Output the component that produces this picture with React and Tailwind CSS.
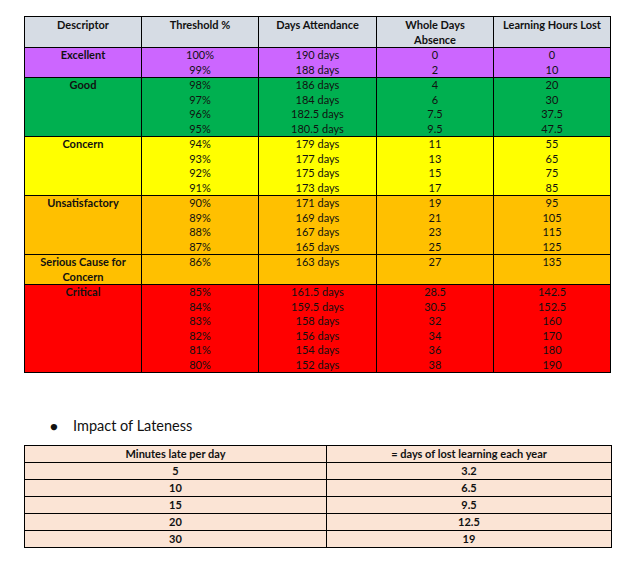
import React from 'react'

const bands = [
  {
    name: 'Excellent',
    bg: 'bg-[#cc66ff]',
    rows: [
      ['100%', '190 days', '0', '0'],
      ['99%', '188 days', '2', '10'],
    ],
  },
  {
    name: 'Good',
    bg: 'bg-[#00b050]',
    rows: [
      ['98%', '186 days', '4', '20'],
      ['97%', '184 days', '6', '30'],
      ['96%', '182.5 days', '7.5', '37.5'],
      ['95%', '180.5 days', '9.5', '47.5'],
    ],
  },
  {
    name: 'Concern',
    bg: 'bg-[#ffff00]',
    rows: [
      ['94%', '179 days', '11', '55'],
      ['93%', '177 days', '13', '65'],
      ['92%', '175 days', '15', '75'],
      ['91%', '173 days', '17', '85'],
    ],
  },
  {
    name: 'Unsatisfactory',
    bg: 'bg-[#ffc000]',
    rows: [
      ['90%', '171 days', '19', '95'],
      ['89%', '169 days', '21', '105'],
      ['88%', '167 days', '23', '115'],
      ['87%', '165 days', '25', '125'],
    ],
  },
  {
    name: (
      <>
        Serious Cause for
        <br />
        Concern
      </>
    ),
    bg: 'bg-[#ffc000]',
    rows: [['86%', '163 days', '27', '135']],
  },
  {
    name: 'Critical',
    bg: 'bg-[#ff0000]',
    rows: [
      ['85%', '161.5 days', '28.5', '142.5'],
      ['84%', '159.5 days', '30.5', '152.5'],
      ['83%', '158 days', '32', '160'],
      ['82%', '156 days', '34', '170'],
      ['81%', '154 days', '36', '180'],
      ['80%', '152 days', '38', '190'],
    ],
  },
]

const lateness = [
  ['5', '3.2'],
  ['10', '6.5'],
  ['15', '9.5'],
  ['20', '12.5'],
  ['30', '19'],
]

function App() {
  const cell = 'border border-black align-top text-center p-0'

  return (
    <div
      className="bg-white w-[641px] h-[567px] pl-[24px] pt-[16px] text-[11px] leading-[14.5px] text-[#111]"
      style={{ fontFamily: 'Lato, "Liberation Sans", sans-serif' }}
    >
      {/* Attendance thresholds */}
      <table className="border-collapse w-[587px] table-fixed">
        <colgroup>
          <col className="w-[117px]" />
          <col className="w-[117px]" />
          <col className="w-[118px]" />
          <col className="w-[117px]" />
          <col className="w-[117px]" />
        </colgroup>
        <thead>
          <tr className="bg-[#d6dce4] h-[30px] font-bold">
            <th className={cell + ' pt-[1px]'}>Descriptor</th>
            <th className={cell + ' pt-[1px]'}>Threshold %</th>
            <th className={cell + ' pt-[1px]'}>Days Attendance</th>
            <th className={cell + ' pt-[1px]'}>
              Whole Days
              <br />
              Absence
            </th>
            <th className={cell + ' pt-[1px]'}>Learning Hours Lost</th>
          </tr>
        </thead>
        <tbody>
          {bands.map((band, i) => (
            <tr key={i} className={band.bg}>
              <td className={cell + ' font-bold'}>{band.name}</td>
              {[0, 1, 2, 3].map((c) => (
                <td key={c} className={cell}>
                  {band.rows.map((r, j) => (
                    <div key={j}>{r[c]}</div>
                  ))}
                </td>
              ))}
            </tr>
          ))}
        </tbody>
      </table>

      {/* Lateness */}
      <div className="flex items-center mt-[44px] h-[18px] text-[14.5px]">
        <span className="w-[49px] pl-[26px] text-[13px]">●</span>
        <span>Impact of Lateness</span>
      </div>

      <table className="border-collapse w-[587px] table-fixed mt-[10px] bg-[#fbe4d5] font-bold">
        <colgroup>
          <col className="w-[302px]" />
          <col className="w-[285px]" />
        </colgroup>
        <tbody>
          <tr className="h-[17px]">
            <td className="border border-black text-center p-0">Minutes late per day</td>
            <td className="border border-black text-center p-0">= days of lost learning each year</td>
          </tr>
          {lateness.map((r) => (
            <tr key={r[0]} className="h-[17px]">
              <td className="border border-black text-center p-0">{r[0]}</td>
              <td className="border border-black text-center p-0">{r[1]}</td>
            </tr>
          ))}
        </tbody>
      </table>
    </div>
  )
}

export default App
